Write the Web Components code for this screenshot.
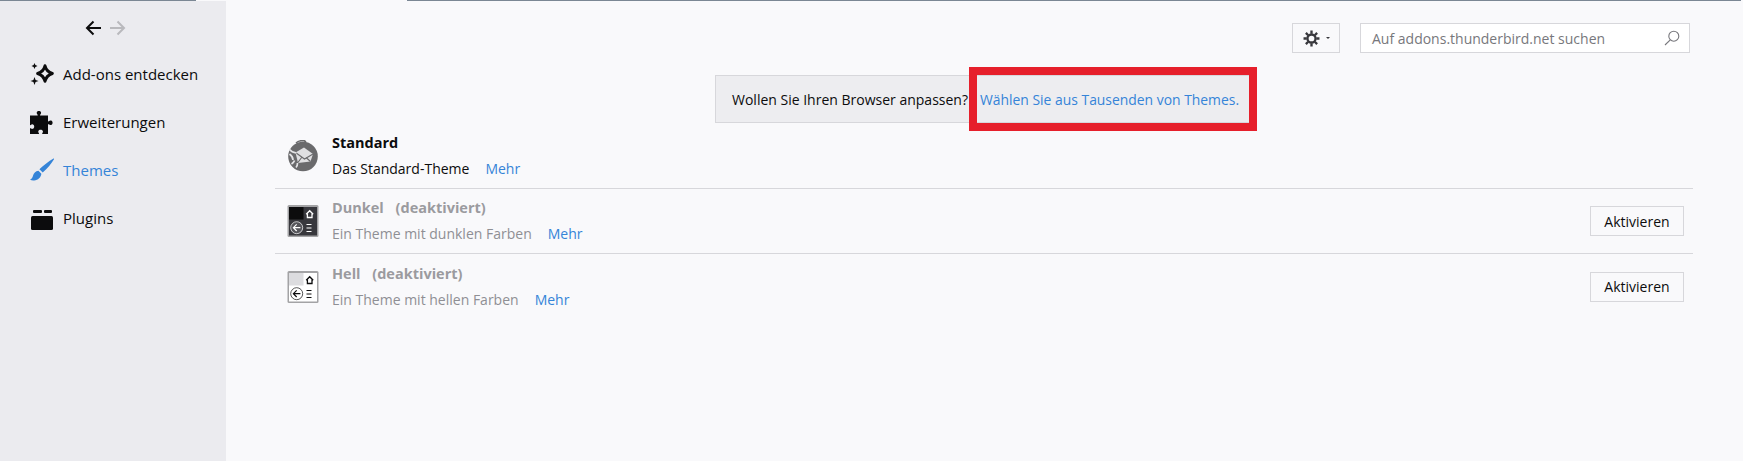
<!DOCTYPE html>
<html lang="de">
<head>
<meta charset="utf-8">
<title>Add-ons</title>
<style>
  html, body { margin: 0; height: 100%; overflow: hidden; background: #f9f9fb; }
  body { font: 15px "Open Sans", "Noto Sans", sans-serif; color: #0c0c0d; }
</style>
</head>
<body>
<addons-page>
  <addons-nav slot="side">
    <nav-item label="Add-ons entdecken" icon="discover"></nav-item>
    <nav-item label="Erweiterungen" icon="puzzle"></nav-item>
    <nav-item label="Themes" icon="brush" active></nav-item>
    <nav-item label="Plugins" icon="plugin"></nav-item>
  </addons-nav>
  <addons-toolbar slot="main"></addons-toolbar>
  <addons-notice slot="main"></addons-notice>
  <theme-list slot="main">
    <theme-row name="Standard" desc="Das Standard-Theme" icon="default"></theme-row>
    <theme-row name="Dunkel" desc="Ein Theme mit dunklen Farben" icon="dark" disabled></theme-row>
    <theme-row name="Hell" desc="Ein Theme mit hellen Farben" icon="light" disabled></theme-row>
  </theme-list>
</addons-page>

<script>
const ICONS = {
  discover: `<svg width="24" height="24" viewBox="0 0 24 24" fill="currentColor">
    <path d="M15 3.800C16 8 18 10 22.300 11.500 18 13 16 15 15 19.200 14 15 12 13 7.700 11.500 12 10 14 8 15 3.800z" fill="none" stroke="currentColor" stroke-width="3" stroke-linejoin="round"/>
    <path d="M4.500 1l.9 2.100 2.100.9-2.100.9L4.500 7l-.9-2.100L1.500 4l2.100-.9zM4.500 15l1.100 2.900 2.900 1.100-2.900 1.100L4.500 23l-1.100-2.900L.5 19l2.900-1.100z"/></svg>`,
  puzzle: `<svg width="24" height="24" viewBox="0 0 24 24" fill="currentColor">
    <path d="M0 5.500h7.300c.5 0 .6-.4.3-.8C6.800 3.800 6.600 3 6.800 2.200 7.100 1.400 7.900 1 8.900 1s1.800.4 2.100 1.200c.2.800 0 1.600-.8 2.500-.3.400-.2.800.3.800H18v5.500c0 .5.400.6.800.3.700-.7 1.500-.9 2.300-.7.800.3 1.500 1.100 1.500 2.200s-.7 1.900-1.500 2.200c-.8.200-1.600 0-2.300-.7-.4-.3-.8-.2-.8.300V24h-5.400c-.5 0-.6-.4-.3-.8.700-.8.800-1.500.5-2.200-.3-.8-1.100-1.300-2.200-1.300s-1.900.5-2.200 1.300c-.3.700-.2 1.400.5 2.200.3.400.2.800-.3.800H0v-5.400c0-.5.400-.6.800-.3.700.7 1.400.8 2.100.5.800-.3 1.300-1.100 1.300-2.200S3.700 14.800 2.900 14.500c-.7-.3-1.400-.2-2.100.5-.4.300-.8.200-.8-.3z"/></svg>`,
  brush: `<svg width="24" height="24" viewBox="0 0 24 24" fill="currentColor">
    <path d="M23.500.5c.4-.3.800.1.600.5-2.700 4.500-6.300 9.100-11.400 13.400l-3.300-3.100C13.700 7.300 18.600 3.400 23.500.5z"/>
    <path d="M8.400 12.800l3 2.900c-.5 3.700-3.300 6.400-7.200 6.700-1.500.1-3 0-4.200-.6 1.900-1 2.500-2.300 3-4 .6-2.600 2.500-4.600 5.400-5z"/></svg>`,
  plugin: `<svg width="24" height="24" viewBox="0 0 24 24" fill="currentColor">
    <rect x="3" y="4" width="9" height="3" rx="1"/><rect x="14" y="4" width="8" height="3" rx="1"/>
    <rect x="1" y="10" width="22" height="14" rx="1.500"/></svg>`
};

const THEME_ICONS = {
  default: `<svg width="32" height="32" viewBox="0 0 32 32">
    <circle cx="16" cy="16.500" r="14.800" fill="#6a6a6c"/>
    <path d="M9 3C11 1 15 .5 17 .5l2 1.500" fill="none" stroke="#6a6a6c" stroke-width="1.600"/>
    <path d="M8.500 12.500L17 7.500l9 6.500-2.500 7.500-12.500 1.500z" fill="#dfdfe1"/>
    <path d="M8.500 12.500l9 6.500 8.500-5M10.500 23l4.500-6M23.500 21.500l-4.500-4" fill="none" stroke="#6a6a6c" stroke-width="1.100"/>
    <path d="M2.500 9.500c1.500 2 4 3 7 3.500M2.500 14c2 1.500 3.500 3.500 3.500 6M4.500 24c1.500-1 2.500-2 3-3.500M9 27.500c1-1 1.500-2 1.500-4.500" fill="none" stroke="#e4e4e6" stroke-width="1.700"/></svg>`,
  dark: themeThumb('#a3a3a5', '#38383d', '#0c0c0d', '#fff', '#55555a'),
  light: themeThumb('#a3a3a5', '#fff', '#dcdcdf', '#0c0c0d', '#fff')
};

function themeThumb(frame, bg, tab, fg, circle) {
  return `<svg width="32" height="32" viewBox="0 0 32 32">
    <rect x=".5" y="0" width="31" height="32" rx="1.500" fill="${frame}"/>
    <rect x="2" y="2" width="28" height="28.500" fill="${bg}"/>
    <rect x="2" y="2" width="14.500" height="12.500" fill="${tab}"/>
    <path d="M19.200 9.200l3.500-3.500 3.500 3.500M20.400 8.700v3.800h4.600V8.700" fill="none" stroke="${fg}" stroke-width="1.300"/>
    <circle cx="9.700" cy="22.700" r="6" fill="${circle}" stroke="${fg}" stroke-width=".7"/>
    <path d="M13.400 22.700H6.400M9.700 19.400l-3.300 3.300 3.300 3.300" fill="none" stroke="${fg}" stroke-width="1.200"/>
    <path d="M19.500 19.500h5M19.500 23h5M19.500 26.500h5" stroke="${fg}" stroke-width="1.200"/></svg>`;
}

class AddonsPage extends HTMLElement {
  connectedCallback(){
    if(this.shadowRoot) return;
    this.attachShadow({mode: 'open'}).innerHTML = `
      <style>
        :host { display: flex; flex-direction: column; height: 461px; position: relative; }
        .strip { display: flex; height: 1px; flex: none; padding-right: 2px; }
        .strip i { background: #7b8794; }
        .strip i:nth-child(1) { width: 196px; }
        .strip i:nth-child(2) { width: 211px; background: transparent; }
        .strip i:nth-child(3) { flex: 1; }
        .body { display: flex; flex: 1; min-height: 0; }
        aside { width: 226px; flex: none; background: #ebebef; }
        main { flex: 1; min-width: 0; padding: 22px 50px 0 49px; }
      </style>
      <div class="strip"><i></i><i></i><i></i></div>
      <div class="body">
        <aside><slot name="side"></slot></aside>
        <main><slot name="main"></slot></main>
      </div>`;
  }
}

class AddonsNav extends HTMLElement {
  connectedCallback(){
    if(this.shadowRoot) return;
    this.attachShadow({mode: 'open'}).innerHTML = `
      <style>
        :host { display: block; }
        .arrows { display: flex; justify-content: center; gap: 5px; padding: 18px 15px 13px 0; height: 18px; color: #0c0c0d; }
        .arrows svg:last-child { color: #b9b9bd; }
      </style>
      <div class="arrows">
        <svg width="19" height="18" viewBox="0 0 19 18" fill="none" stroke="currentColor" stroke-width="2"><path d="M17 9H3M9.500 2.500L3 9l6.500 6.500"/></svg>
        <svg width="19" height="18" viewBox="0 0 19 18" fill="none" stroke="currentColor" stroke-width="2"><path d="M2 9h14M9.500 2.500L16 9l-6.500 6.500"/></svg>
      </div>
      <slot></slot>`;
  }
}

class NavItem extends HTMLElement {
  connectedCallback(){
    if(this.shadowRoot) return;
    const active = this.hasAttribute('active');
    this.attachShadow({mode: 'open'}).innerHTML = `
      <style>
        :host { display: flex; align-items: center; height: 48px; padding-left: 30px; gap: 9px; color: ${active ? '#3584d8' : '#0c0c0d'}; }
        svg { display: block; flex: none; }
      </style>
      ${ICONS[this.getAttribute('icon')]}
      <span>${this.getAttribute('label')}</span>`;
  }
}

class AddonsToolbar extends HTMLElement {
  connectedCallback(){
    if(this.shadowRoot) return;
    this.attachShadow({mode: 'open'}).innerHTML = `
      <style>
        :host { display: flex; justify-content: flex-end; gap: 20px; height: 30px; padding-right: 3px; }
        .gear, .search { box-sizing: border-box; height: 30px; background: #fff; border: 1px solid #d7d7db; }
        .gear { width: 48px; display: flex; align-items: center; gap: 6px; padding-left: 10px; color: #38383d; background: #f9f9fb; }
        .caret { width: 0; height: 0; border: 2.500px solid transparent; border-top-color: #38383d; border-bottom: 0; }
        .search { width: 330px; display: flex; align-items: center; justify-content: space-between; padding: 0 9px 0 11px; font-size: 14px; color: #77777c; }
      </style>
      <div class="gear">
        <svg width="17" height="17" viewBox="0 0 16 16" fill="none" stroke="currentColor">
          <circle cx="8" cy="8" r="3.800" stroke-width="2.200"/>
          <path stroke-width="2.200" d="M8 .5v3M8 12.500v3M.5 8h3M12.500 8h3M2.700 2.700l2.200 2.200M11.100 11.100l2.200 2.200M2.700 13.300l2.200-2.200M11.100 4.900l2.200-2.200"/>
        </svg>
        <span class="caret"></span>
      </div>
      <div class="search">
        <span>Auf addons.thunderbird.net suchen</span>
        <svg width="16" height="16" viewBox="0 0 16 16" fill="none" stroke="#77777c" stroke-width="1.100"><circle cx="9.800" cy="6.200" r="5"/><path d="M6.300 9.800L1 15"/></svg>
      </div>`;
  }
}

class AddonsNotice extends HTMLElement {
  connectedCallback(){
    if(this.shadowRoot) return;
    this.attachShadow({mode: 'open'}).innerHTML = `
      <style>
        :host { display: flex; justify-content: center; margin-top: 22px; margin-bottom: -2px; padding-right: 3px; }
        .box { position: relative; box-sizing: border-box; display: flex; align-items: center; width: 535px; height: 48px; padding: 0 0 0 16px; background: #ededf0; border: 1px solid #d7d7db; gap: 12px; font-size: 14px; white-space: nowrap; }
        a { color: #3584d8; text-decoration: none; font-size: 13.900px; }
        .mark { position: absolute; left: 253px; top: -9px; right: -8px; bottom: -9px; border: 8px solid #e61f2b; }
      </style>
      <div class="box">
        <span>Wollen Sie Ihren Browser anpassen?</span>
        <a href="#">Wählen Sie aus Tausenden von Themes.</a>
        <div class="mark"></div>
      </div>`;
  }
}

class ThemeList extends HTMLElement {
  connectedCallback(){
    if(this.shadowRoot) return;
    this.attachShadow({mode: 'open'}).innerHTML = `
      <style>:host { display: block; margin-top: 3px; }</style>
      <slot></slot>`;
  }
}

class ThemeRow extends HTMLElement {
  connectedCallback(){
    if(this.shadowRoot) return;
    const off = this.hasAttribute('disabled');
    const name = this.getAttribute('name');
    this.attachShadow({mode: 'open'}).innerHTML = `
      <style>
        :host { display: flex; align-items: center; height: 65px; box-sizing: border-box; padding: 0 9px 0 12px; border-bottom: 1px solid #d7d7db; }
        :host(:last-child) { border-bottom: 0; }
        .icon { width: 32px; height: 32px; flex: none; margin-right: 13px; }
        .icon svg { display: block; }
        .text { flex: 1; min-width: 0; }
        .title { font-weight: 700; font-size: 14.500px; line-height: 20px; color: ${off ? '#9b9b9f' : '#0c0c0d'}; }
        .title span { margin-left: 8px; }
        .sub { font-size: 14px; line-height: 20px; margin-top: 6px; color: ${off ? '#8f8f94' : '#0c0c0d'}; }
        a { color: #3584d8; text-decoration: none; margin-left: 16px; }
        button { width: 94px; height: 30px; padding: 0; font: inherit; font-size: 14px; color: #0c0c0d; background: #f9f9fb; border: 1px solid #d7d7db; }
      </style>
      <div class="icon">${THEME_ICONS[this.getAttribute('icon')]}</div>
      <div class="text">
        <div class="title">${name}${off ? '<span> (deaktiviert)</span>' : ''}</div>
        <div class="sub">${this.getAttribute('desc')}<a href="#">Mehr</a></div>
      </div>
      ${off ? '<button>Aktivieren</button>' : ''}`;
  }
}

customElements.define('addons-page', AddonsPage);
customElements.define('addons-nav', AddonsNav);
customElements.define('nav-item', NavItem);
customElements.define('addons-toolbar', AddonsToolbar);
customElements.define('addons-notice', AddonsNotice);
customElements.define('theme-list', ThemeList);
customElements.define('theme-row', ThemeRow);
</script>
</body>
</html>
